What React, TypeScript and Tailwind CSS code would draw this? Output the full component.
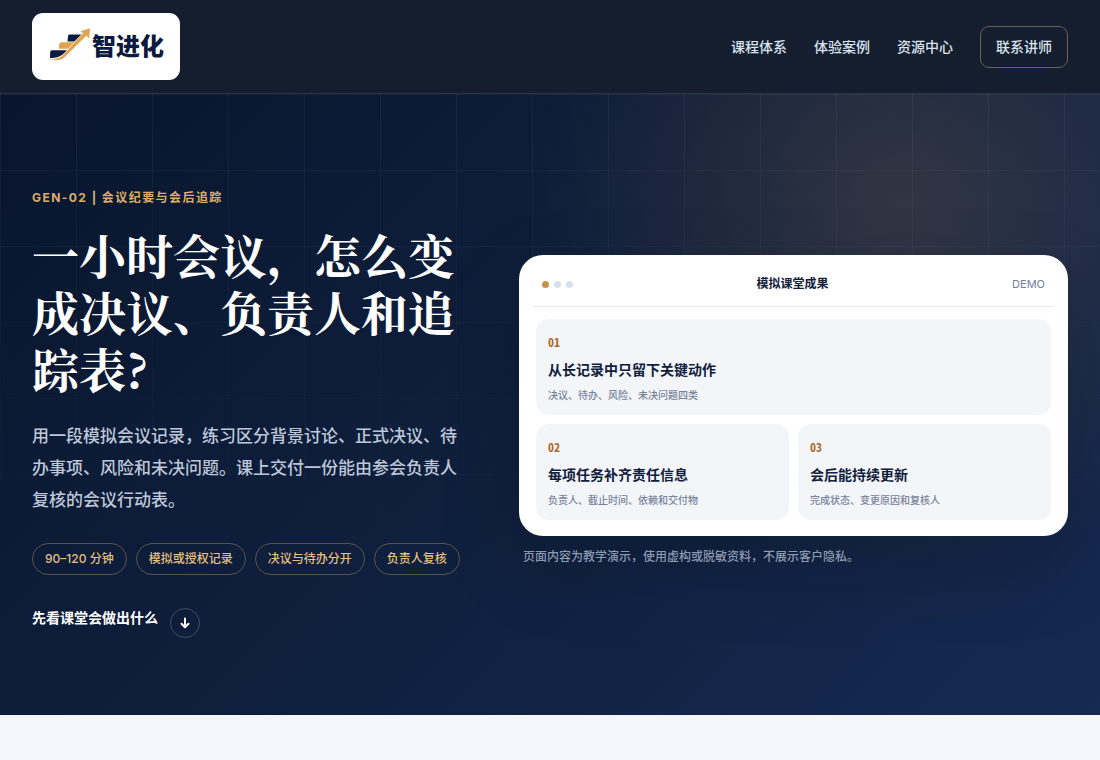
import React from "react";

const navLinks = ["课程体系", "体验案例", "资源中心"];
const tags = ["90–120 分钟", "模拟或授权记录", "决议与待办分开", "负责人复核"];
const results = [
  { no: "01", title: "从长记录中只留下关键动作", text: "决议、待办、风险、未决问题四类", wide: true },
  { no: "02", title: "每项任务补齐责任信息", text: "负责人、截止时间、依赖和交付物", wide: false },
  { no: "03", title: "会后能持续更新", text: "完成状态、变更原因和复核人", wide: false },
];

function LogoMark() {
  return (
    <svg viewBox="0 0 44 33" className="mb-1 h-[33px] w-11 shrink-0" aria-hidden="true">
      <path d="M21 8 Q21 6.500 22.500 6.500 H34.500 L27.500 13.500 H20.500 Z" fill="#0b1a3e" />
      <path d="M12.300 16 Q12.500 14.300 14.200 14.300 H28 L21 20.800 H11.800 Z" fill="#e2a34d" />
      <path d="M3.200 24 Q3.200 22.300 5 22.300 H20 Q15 28.600 9.500 29.400 L3 30.300 Z" fill="#0b1a3e" />
      <path
        d="M0 32 Q11 30.700 15 27.700 C19 24.500 27 14 36 5.300 L32.800 3.200 L43.300 0 L42.400 11 L39.300 8 L20 27 Q16 32.300 11 32.300 Z"
        fill="#e2a34d"
        stroke="#fff"
        strokeWidth="0.5"
      />
    </svg>
  );
}

function Header() {
  return (
    <header className="flex items-center justify-between border-b border-[#2a3444] bg-[#141e2e] px-8 py-[13px]">
      <a href="#" className="flex h-[67px] items-center gap-px rounded-[11px] bg-white pr-4 pl-[15px]">
        <LogoMark />
        <span className="text-[24px] leading-8 font-black text-[#0b1a3e]">智进化</span>
      </a>
      <nav className="flex items-center gap-[27px] text-[14px] leading-5 font-medium text-[#dbe3f0]">
        {navLinks.map((label) => (
          <a key={label} href="#">
            {label}
          </a>
        ))}
        <a href="#" className="rounded-[9px] border border-[#6d6150] px-[15px] py-[10px]">
          联系讲师
        </a>
      </nav>
    </header>
  );
}

function ResultCard() {
  return (
    <div className="rounded-[24px] border border-white/60 bg-white px-[13px] pt-[13px] pb-[15px] shadow-[0_30px_80px_rgba(0,0,0,0.2)]">
      <div className="flex items-center justify-between border-b border-[#e5e8f2] px-[9px] pt-[5px] pb-[12px] text-[12px] leading-5">
        <div className="flex gap-[5px]">
          <span className="size-[7px] rounded-full bg-[#c7924c]" />
          <span className="size-[7px] rounded-full bg-[#d8dfea]" />
          <span className="size-[7px] rounded-full bg-[#d8dfea]" />
        </div>
        <strong className="font-bold text-[#10203c]">模拟课堂成果</strong>
        <span className="text-[11px] text-[#738099]">DEMO</span>
      </div>
      <div className="grid grid-cols-2 gap-[9px] px-[3px] pt-3">
        {results.map((item) => (
          <article
            key={item.no}
            className={`rounded-[13px] bg-[#f3f5f9] px-3 pt-[15px] pb-3 ${item.wide ? "col-span-2" : ""}`}
          >
            <p className="font-['Noto_Sans_Mono_CJK_SC','Liberation_Mono',monospace] text-[12px] leading-4 font-bold text-[#a96c2b]">
              {item.no}
            </p>
            <h2 className="mt-[9px] text-[14px] leading-[22px] font-bold text-[#10203c]">{item.title}</h2>
            <p className="mt-[6px] text-[10px] leading-4 font-medium text-[#78839a]">{item.text}</p>
          </article>
        ))}
      </div>
    </div>
  );
}

function Hero() {
  return (
    <section className="relative isolate bg-[radial-gradient(circle_at_82%_18%,rgba(199,146,76,0.18),transparent_36%),linear-gradient(135deg,#09152d_0%,#0f203e_52%,#162a52_100%)]">
      <div
        aria-hidden="true"
        className="absolute inset-0 -z-10 bg-[linear-gradient(rgba(255,255,255,0.045)_1px,transparent_1px),linear-gradient(90deg,rgba(255,255,255,0.045)_1px,transparent_1px)] [mask-image:linear-gradient(to_bottom,black,transparent_80%)] bg-[size:76px_76px]"
      />
      <div className="grid grid-cols-[433fr_549fr] items-start gap-[54px] px-8 pt-[94px] pb-[77px]">
        <div>
          <p className="text-[12px] leading-5 font-bold tracking-[0.12em] text-[#dcae68]">
            GEN-02 | 会议纪要与会后追踪
          </p>
          <h1 className="mt-[17px] font-['Noto_Serif_CJK_SC','Noto_Serif_SC','Songti_SC','Liberation_Serif',serif] text-[47px] leading-[57px] font-bold text-white">
            一小时会议，怎么变成决议、负责人和追踪表?
          </h1>
          <p className="mt-6 text-[17px] leading-8 font-medium text-[#bdc7d9]">
            用一段模拟会议记录，练习区分背景讨论、正式决议、待办事项、风险和未决问题。课上交付一份能由参会负责人复核的会议行动表。
          </p>
          <ul className="mt-[27px] flex flex-wrap gap-[9px]">
            {tags.map((tag) => (
              <li
                key={tag}
                className="rounded-full border border-[#5b5348] px-3 py-[5px] text-[12px] leading-5 font-medium text-[#e5bf83]"
              >
                {tag}
              </li>
            ))}
          </ul>
          <a href="#" className="mt-[33px] inline-flex items-start gap-3 text-[14px] leading-5 font-bold text-white">
            先看课堂会做出什么
            <span className="flex size-[30px] items-center justify-center rounded-full border border-[#3b4b68]">
              <svg viewBox="0 0 12 12" className="size-3" fill="none" stroke="currentColor" strokeWidth="2" strokeLinecap="round" strokeLinejoin="round" aria-hidden="true">
                <path d="M6 1.500 V10 M2.500 6.800 L6 10.300 L9.500 6.800" />
              </svg>
            </span>
          </a>
        </div>
        <div className="pt-[67px]">
          <ResultCard />
          <p className="mt-[11px] px-1 text-[12px] leading-5 font-medium text-[#8c99b1]">
            页面内容为教学演示，使用虚构或脱敏资料，不展示客户隐私。
          </p>
        </div>
      </div>
    </section>
  );
}

export default function App() {
  return (
    <div lang="zh-CN" className="min-h-screen bg-[#f4f6fb] font-['Inter','Noto_Sans_CJK_SC',sans-serif]">
      <Header />
      <main>
        <Hero />
      </main>
    </div>
  );
}
